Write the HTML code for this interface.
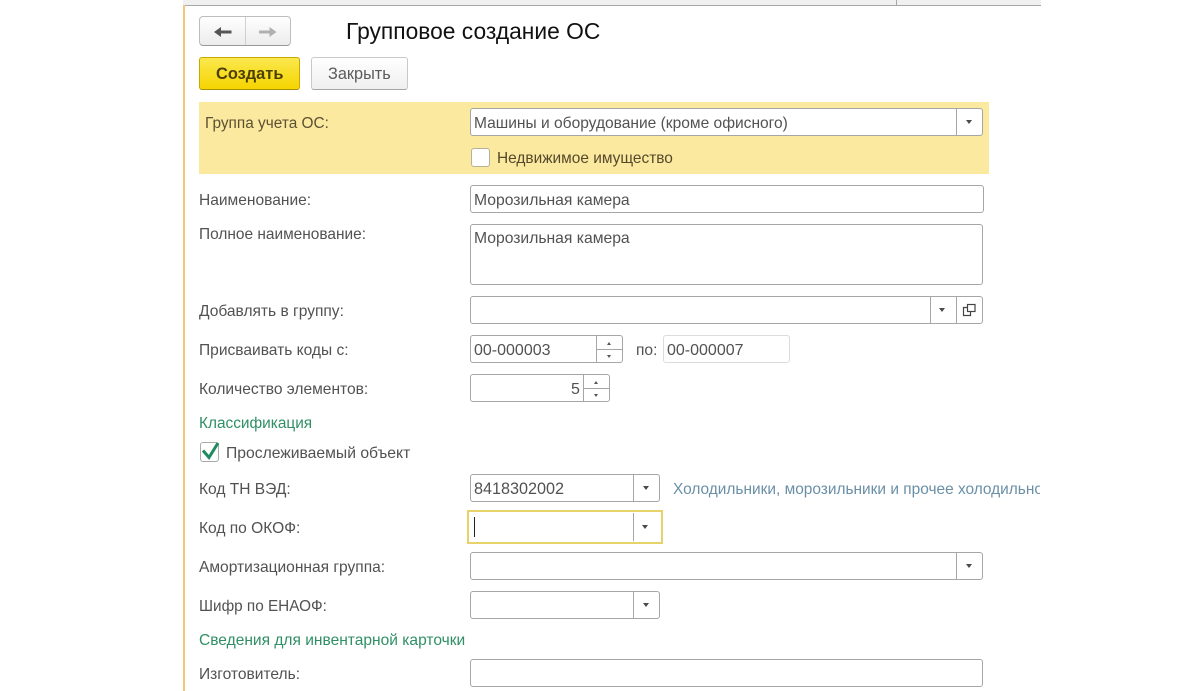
<!DOCTYPE html>
<html lang="ru"><head><meta charset="utf-8"><title>Групповое создание ОС</title>
<style>
html,body{margin:0;padding:0;background:#fff}
body{width:1200px;height:691px;position:relative;overflow:hidden;font-family:"Liberation Sans",sans-serif;font-size:15.55px;color:#525252}
.a{position:absolute;box-sizing:border-box;white-space:nowrap}
.t{position:absolute;white-space:nowrap;line-height:18px;margin-top:2px}
.f{position:absolute;box-sizing:border-box;border:1px solid #a6a6a6;border-radius:3px;background:#fff}
.v{position:absolute;background:#a6a6a6;width:1px;top:0;bottom:0}
.h{position:absolute;background:#a6a6a6;height:1px}
.d{position:absolute;width:0;height:0;border-left:3.5px solid transparent;border-right:3.5px solid transparent;border-top:4px solid #4a4a4a}
.u{position:absolute;width:0;height:0;border-left:2.5px solid transparent;border-right:2.5px solid transparent;border-bottom:3px solid #555}
.n{position:absolute;width:0;height:0;border-left:2.5px solid transparent;border-right:2.5px solid transparent;border-top:3px solid #555}
.g{color:#2f8f65}
</style></head><body>
<div class="a" style="left:183px;top:0;width:858px;height:6px;background:#f0f0f0;border-bottom:1px solid #a8a8a8"></div>
<div class="a" style="left:896px;top:0;width:1px;height:5px;background:#a8a8a8"></div>
<div class="a" style="left:183px;top:5px;width:2px;height:686px;background:#f2c77c"></div>

<div class="a" style="left:199px;top:16px;width:92px;height:30px;border:1px solid #bdbdbd;border-bottom-color:#999;border-radius:4px;background:linear-gradient(#fff,#ececec)"></div>
<div class="a" style="left:245px;top:17px;width:1px;height:28px;background:#cfcfcf"></div>
<svg class="a" style="left:212px;top:24px" width="68" height="16" viewBox="0 0 68 16"><path d="M2 8 L9 3 V6.5 H19.500 V9.500 H9 V13 Z" fill="#555"/><path d="M64.500 8 L57.500 3 V6.500 H47 V9.500 H57.500 V13 Z" fill="#b0b0b0"/></svg>
<div class="t" style="left:346px;top:19px;margin-top:0;font-size:22.8px;line-height:24px;color:#111">Групповое создание ОС</div>

<div class="a" style="left:199px;top:57px;width:101px;height:33px;border:1px solid #c9a800;border-bottom-color:#a99000;border-radius:3px;background:linear-gradient(#fbe84e,#f5d400)"></div>
<div class="t" style="left:216px;top:63px;font-size:16.4px;font-weight:bold;color:#4d3f00">Создать</div>
<div class="a" style="left:311px;top:57px;width:97px;height:33px;border:1px solid #c9c9c9;border-bottom-color:#a5a5a5;border-radius:3px;background:linear-gradient(#fff,#efefef)"></div>
<div class="t" style="left:328px;top:63px;font-size:16.3px;color:#5a5a5a">Закрыть</div>

<div class="a" style="left:199px;top:102px;width:790px;height:72px;background:#fbe9a0"></div>
<div class="t" style="left:205px;top:113px;font-size:15.4px;color:#5c5132">Группа учета ОС:</div>
<div class="f" style="left:470px;top:108px;width:513px;height:28px"><div class="v" style="left:485px"></div><div class="d" style="left:495px;top:11px"></div></div>
<div class="t" style="left:474px;top:113px">Машины и оборудование (кроме офисного)</div>
<div class="f" style="left:471px;top:148px;width:19px;height:19px;border-color:#b5b09a"></div>
<div class="t" style="left:497px;top:148px;font-size:15.45px;color:#54492a">Недвижимое имущество</div>

<div class="t" style="left:199px;top:190px">Наименование:</div>
<div class="f" style="left:470px;top:185px;width:514px;height:28px"></div>
<div class="t" style="left:474px;top:190px;font-size:15.7px">Морозильная камера</div>

<div class="t" style="left:199px;top:224px;font-size:15.45px">Полное наименование:</div>
<div class="f" style="left:470px;top:224px;width:513px;height:61px"></div>
<div class="t" style="left:474px;top:228px;font-size:15.7px">Морозильная камера</div>

<div class="t" style="left:199px;top:301px">Добавлять в группу:</div>
<div class="f" style="left:470px;top:296px;width:513px;height:28px"><div class="v" style="left:459px"></div><div class="v" style="left:485px"></div><div class="d" style="left:468px;top:11px"></div>
<svg style="position:absolute;left:491px;top:6px" width="14" height="14" viewBox="0 0 14 14" fill="none" stroke="#444" stroke-width="1.2"><rect x="5.500" y="1.500" width="7.500" height="7"/><path d="M5.500 4.500H1.500V12.500H8.500V8.500"/></svg></div>

<div class="t" style="left:199px;top:340px">Присваивать коды с:</div>
<div class="f" style="left:470px;top:335px;width:153px;height:28px"><div class="v" style="left:125px"></div><div class="h" style="left:125px;right:0;top:13px"></div><div class="u" style="left:136px;top:6px"></div><div class="n" style="left:136px;top:19px"></div></div>
<div class="t" style="left:474px;top:340px;font-size:16px">00-000003</div>
<div class="t" style="left:636px;top:340px">по:</div>
<div class="f" style="left:663px;top:335px;width:127px;height:28px;border-color:#dcdcdc"></div>
<div class="t" style="left:667px;top:340px;font-size:16px">00-000007</div>

<div class="t" style="left:199px;top:379px">Количество элементов:</div>
<div class="f" style="left:470px;top:374px;width:140px;height:28px"><div class="v" style="left:112px"></div><div class="h" style="left:112px;right:0;top:13px"></div><div class="u" style="left:123px;top:6px"></div><div class="n" style="left:123px;top:19px"></div></div>
<div class="t" style="left:571px;top:379px;font-size:16px">5</div>

<div class="t g" style="left:199px;top:413px;font-size:15.4px">Классификация</div>
<div class="f" style="left:200px;top:442px;width:19px;height:20px;border-color:#aaa"></div>
<svg class="a" style="left:200px;top:441px" width="20" height="20" viewBox="0 0 20 20"><path d="M3 9.500 L9 16.500 L18 2" fill="none" stroke="#1f8a5f" stroke-width="3"/></svg>
<div class="t" style="left:226px;top:443px;font-size:15.7px">Прослеживаемый объект</div>

<div class="t" style="left:199px;top:479px">Код ТН ВЭД:</div>
<div class="f" style="left:470px;top:474px;width:190px;height:28px"><div class="v" style="left:162px"></div><div class="d" style="left:172px;top:11px"></div></div>
<div class="t" style="left:474px;top:478px;font-size:16.2px">8418302002</div>
<div class="t" style="left:673px;top:479px;font-size:15.45px;color:#6a8fa6;width:367px;overflow:hidden">Холодильники, морозильники и прочее холодильное</div>

<div class="t" style="left:199px;top:518px">Код по ОКОФ:</div>
<div class="a" style="left:467px;top:510px;width:196px;height:34px;border:2px solid #e8d36a;background:#fff"></div>
<div class="a" style="left:633px;top:513px;width:1px;height:28px;background:#a6a6a6"></div>
<div class="d" style="left:642px;top:525px"></div>
<div class="a" style="left:474px;top:517px;width:1px;height:20px;background:#222"></div>

<div class="t" style="left:199px;top:557px">Амортизационная группа:</div>
<div class="f" style="left:470px;top:552px;width:513px;height:28px"><div class="v" style="left:485px"></div><div class="d" style="left:495px;top:11px"></div></div>

<div class="t" style="left:199px;top:596px;font-size:15.3px">Шифр по ЕНАОФ:</div>
<div class="f" style="left:470px;top:591px;width:190px;height:28px"><div class="v" style="left:162px"></div><div class="d" style="left:172px;top:11px"></div></div>

<div class="t g" style="left:199px;top:630px">Сведения для инвентарной карточки</div>
<div class="t" style="left:199px;top:664px">Изготовитель:</div>
<div class="f" style="left:470px;top:659px;width:513px;height:28px"></div>
</body></html>
